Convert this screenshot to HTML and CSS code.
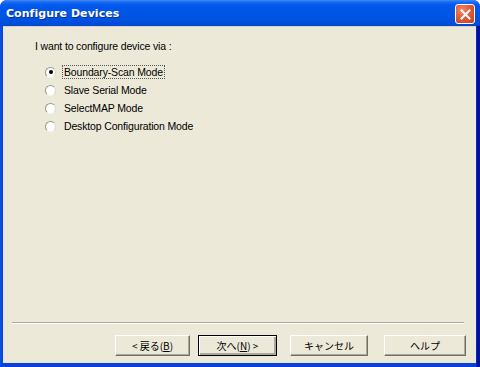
FILE: index.html
```html
<!DOCTYPE html>
<html lang="ja">
<head>
    <meta charset="UTF-8">
    <title>Configure Devices</title>
    <link rel="stylesheet" href="styles.css">
</head>
<body>
    <div class="window">
        <div class="titlebar">
            <span class="title">Configure Devices</span>
            <button class="btn-close" aria-label="Close">
                <svg width="11" height="11" viewBox="0 0 11 11">
                    <path d="M1.5 1.5 L9.5 9.5 M9.5 1.5 L1.5 9.5" stroke="#fff" stroke-width="2" stroke-linecap="square"/>
                </svg>
            </button>
        </div>
        <div class="client">
            <div class="content">
                <p class="prompt">I want to configure device via :</p>
                <ul class="options">
                    <li class="option"><span class="radio checked"></span><span class="label focus">Boundary-Scan Mode</span></li>
                    <li class="option"><span class="radio"></span><span class="label">Slave Serial Mode</span></li>
                    <li class="option"><span class="radio"></span><span class="label">SelectMAP Mode</span></li>
                    <li class="option"><span class="radio"></span><span class="label">Desktop Configuration Mode</span></li>
                </ul>
            </div>
            <div class="separator"></div>
            <div class="buttons">
                <button class="btn btn-back">&lt; 戻る(<u>B</u>)</button>
                <button class="btn btn-default">次へ(<u>N</u>) &gt;</button>
                <button class="btn btn-cancel">キャンセル</button>
                <button class="btn btn-help">ヘルプ</button>
            </div>
        </div>
    </div>
</body>
</html>
```

FILE: styles.css
```css
html, body {
    margin: 0;
    padding: 0;
}
body {
    width: 480px;
    height: 367px;
    overflow: hidden;
    font-family: "Liberation Sans", "Noto Sans CJK JP", sans-serif;
    font-size: 11px;
    color: #000;
}
.window {
    width: 480px;
    height: 367px;
    box-sizing: border-box;
    display: flex;
    flex-direction: column;
    border-radius: 7px 7px 0 0;
    padding: 0 4px 4px 3px;
    background: linear-gradient(to right, #0a55e6 0, #0842d8 3px, #0842d8 476px, #00139e 477px);
}
.titlebar {
    height: 26px;
    margin: 0 -4px 0 -3px;
    padding: 0 5px 0 6px;
    display: flex;
    align-items: center;
    justify-content: space-between;
    border-radius: 7px 7px 0 0;
    background: linear-gradient(to bottom, #3d8cf7 0, #1c6cf0 2px, #0058ee 5px, #0055e5 14px, #0050dd 22px, #0046d0 26px);
}
.title {
    color: #fff;
    font-family: "DejaVu Sans", sans-serif;
    font-weight: bold;
    font-size: 11px;
    letter-spacing: 0.05px;
    text-shadow: 1px 1px 0 #0a2f9a;
    padding-top: 1px;
}
.btn-close {
    width: 20px;
    height: 20px;
    margin-top: 2px;
    padding: 0;
    border: 1px solid #fff;
    border-radius: 3px;
    background: radial-gradient(circle at 35% 30%, #f08a6c 0, #e25b37 45%, #c8401e 100%);
    display: flex;
    align-items: center;
    justify-content: center;
}
.client {
    flex: 1;
    display: flex;
    flex-direction: column;
    background: #ece9d8;
    border-top: 1px solid #d6d3c4;
}
.content {
    flex: 1;
    padding: 13px 0 0 32px;
}
.prompt {
    margin: 0 0 11px 0;
    font-size: 10.5px;
    letter-spacing: -0.15px;
}
.options {
    list-style: none;
    margin: 0;
    padding: 0 0 0 10px;
}
.option {
    display: flex;
    align-items: center;
    height: 18px;
    font-size: 10.5px;
    letter-spacing: -0.15px;
}
.radio {
    width: 11px;
    height: 11px;
    box-sizing: border-box;
    border-radius: 50%;
    border: 1px solid;
    border-color: #9a9889 #dcd9cb #f4f3ee #9a9889;
    background: #fff;
    margin-right: 6px;
    position: relative;
}
.radio.checked::after {
    content: "";
    position: absolute;
    left: 2.5px;
    top: 2.5px;
    width: 4px;
    height: 4px;
    border-radius: 50%;
    background: #000;
}
.label {
    padding: 0 1px;
    border: 1px dotted transparent;
}
.label.focus {
    border-color: #555;
}
.separator {
    margin: 0 12px 0 9px;
    height: 1px;
    background: #aca899;
    border-bottom: 1px solid #fff;
}
.buttons {
    display: flex;
    padding: 11px 10px 7px 112px;
}
.btn {
    width: 76px;
    height: 21px;
    box-sizing: border-box;
    padding: 0;
    font-family: "Noto Sans CJK JP", "Liberation Sans", sans-serif;
    font-size: 10px;
    background: #ece9d8;
    border: 1px solid;
    border-color: #fff #716f64 #716f64 #fff;
    box-shadow: inset -1px -1px 0 #aca899;
    color: #000;
}
.btn-back {
    width: 75px;
    margin-right: 8px;
}
.btn-default {
    width: 79px;
    border-color: #000;
    box-shadow: inset 1px 1px 0 #fff, inset -2px -2px 0 #aca899;
    margin-right: 13px;
}
.btn-cancel {
    width: 78px;
    margin-right: 16px;
}
.btn-help {
    width: 82px;
}
```
